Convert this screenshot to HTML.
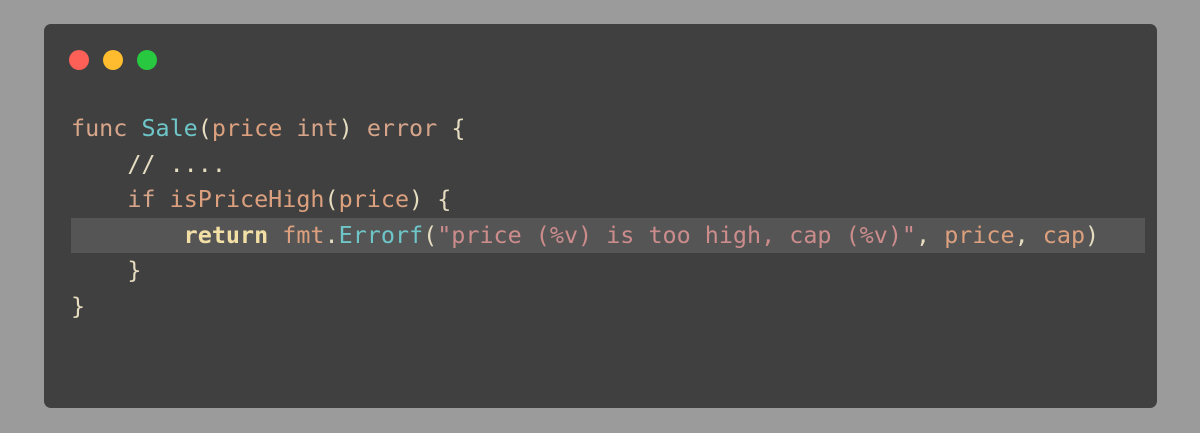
<!DOCTYPE html>
<html><head><style>
html,body{margin:0;padding:0;}
body{width:1200px;height:433px;background:#9b9b9b;position:relative;overflow:hidden;}
.win{position:absolute;left:44px;top:24px;width:1113px;height:384px;background:#404040;border-radius:7px;}
.dot{position:absolute;top:50px;width:20px;height:20px;border-radius:50%;}
.hl{position:absolute;left:71px;top:218px;width:1074px;height:35px;background:#555555;}
pre{position:absolute;left:71px;top:111px;margin:0;font-family:"DejaVu Sans Mono","Liberation Mono",monospace;font-size:23.4px;line-height:35.6px;color:#e6dcc0;}
.k{color:#d7a58a}.f{color:#6ec6c8}.p{color:#dca07e}.s{color:#cc8c8c}.r{color:#f2dfa6;font-weight:bold}.c{color:#e6dcc0}
</style></head><body>
<div class="win"></div>
<div class="dot" style="left:69px;background:#fe5f57"></div>
<div class="dot" style="left:103px;background:#febc2e"></div>
<div class="dot" style="left:137px;background:#28c840"></div>
<div class="hl"></div>
<pre><span class="k">func</span> <span class="f">Sale</span>(<span class="p">price</span> <span class="k">int</span>) <span class="k">error</span> {
    // ....
    <span class="k">if</span> <span class="p">isPriceHigh</span>(<span class="p">price</span>) {
        <span class="r">return</span> <span class="p">fmt</span>.<span class="f">Errorf</span>(<span class="s">"price (%v) is too high, cap (%v)"</span>, <span class="p">price</span>, <span class="p">cap</span>)
    }
}</pre>
</body></html>
